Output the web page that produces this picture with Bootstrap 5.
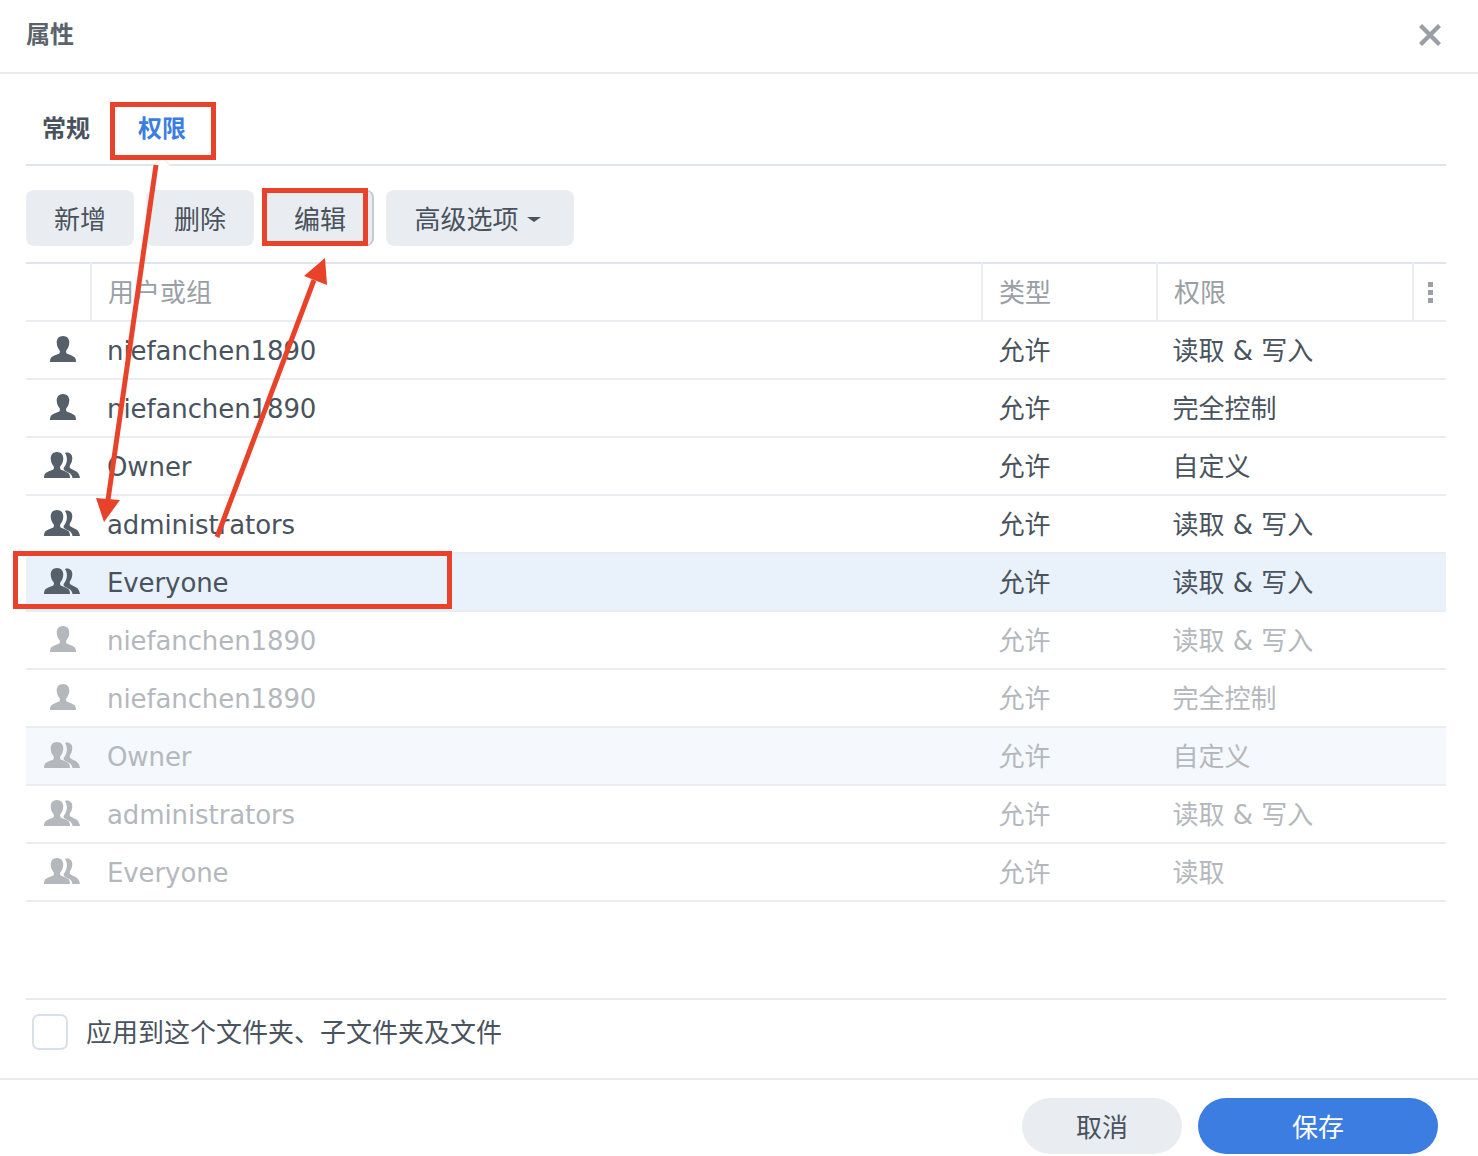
<!DOCTYPE html>
<html lang="zh-CN"><head><meta charset="utf-8"><title>属性</title>
<link href="https://cdn.jsdelivr.net/npm/bootstrap@5.3.0/dist/css/bootstrap.min.css" rel="stylesheet">
<style>
html,body{height:1156px;overflow:hidden;background:#fff}
body{font-family:"DejaVu Sans","Noto Sans CJK SC",sans-serif;font-size:26px;color:#49535e;position:relative}
.dlg-head{height:74px;border-bottom:2px solid #e7ebef;padding:0 37px 3px 26px}
.dlg-title{font-size:24px;font-weight:700;color:#5a636c;margin:0;line-height:1}
.dlg-body{padding:0 32px 0 26px}
.tab-row{height:92px;border-bottom:2px solid #dfe5ec;padding-left:16px;gap:48px;margin:0;position:relative;padding-top:28px}
.tab-row .nav-link{padding:0;font-size:24px;font-weight:700;color:#49535e;line-height:54px;height:54px;border:0;background:none}
.tab-row .nav-link.active{color:#3b7de0;background:none}
.tab-notch{position:absolute;left:130px;bottom:-7px;width:12px;height:12px;background:#fff;border-left:1px solid #e6ebf0;border-top:1px solid #e6ebf0;transform:rotate(45deg)}
.tool-row{gap:12px;padding-top:24px;height:96px}
.tool-btn{height:56px;width:108px;padding:0;background:#e9edf1;border:0;border-radius:8px;font-size:26px;color:#49535e;line-height:60px}
.tool-btn:hover{background:#e9edf1;color:#49535e}
.tool-focus{box-shadow:inset -2px 0 0 #c3cbd4,inset 0 0 0 1px #d4dae1}
.tool-more{width:188px;padding-right:5px}
.tool-caret{display:inline-block;width:0;height:0;border:7px solid transparent;border-top:5px solid #49535e;border-bottom:0;vertical-align:middle;margin-left:8px;margin-top:-4px}
.perm-table{table-layout:fixed;width:1420px;margin:0;border-top:2px solid #dfe5ea;--bs-table-bg:transparent;--bs-table-color:#49535e;color:#49535e}
.perm-table th,.perm-table td{height:58px;padding:2px 0 0 16px;font-size:26px;font-weight:400;vertical-align:middle;border-bottom:2px solid #e9edf1;white-space:nowrap;line-height:1;box-shadow:none}
.perm-table th{color:#9a9fa6;height:58px;border-left:2px solid #e9edf1}
.perm-table th:first-child{border-left:0}
.perm-table td.ic-cell{padding:0 0 0 9px;text-align:center;color:#56606b}
.perm-table th.ic-cell{padding:0;text-align:center}
.perm-table .td-name{letter-spacing:-.1px}
.perm-table .td-type{padding-left:16.5px}
.perm-table .td-perm{padding-left:15.5px}
.ic-svg{display:block;margin:-2px auto 0;fill:currentColor}
.ic-grp{transform:translateX(-1px)}
.row-sel td{background:#e9f1fb;color:#49535e}
.row-off td,.perm-table .row-off td.ic-cell{color:#b4b8bd}
.row-tint td{background:#f5f9fe}
.kebab{display:flex;flex-direction:column;gap:3px;align-items:center}
.kebab i{display:block;width:5px;height:5px;background:#9a9fa6}
.apply-row{margin-top:96px;height:80px;border-top:2px solid #e7ebef;padding:0 0 14px 6px;gap:18px}
.apply-box{width:36px;height:36px;flex:none;margin:0;border:2px solid #d8e0e8;border-radius:7px;background:#fff;appearance:none;display:block}
.apply-label{font-size:26px;line-height:1;color:#49535e;margin:0;padding-top:2px}
.dlg-foot{border-top:2px solid #e7ebef;padding:18px 40px 0 0;gap:16px}
.foot-btn{height:56px;border:0;border-radius:28px;font-size:26px;line-height:60px;padding:0}
.foot-cancel{width:160px;background:#e9edf1;color:#49535e}
.foot-save{width:240px;background:#3b7de0;color:#fff}
.foot-cancel:hover{background:#e9edf1;color:#49535e}.foot-save:hover{background:#3b7de0;color:#fff}
.mark-box{position:absolute;border:5px solid #e8432a;pointer-events:none}
.mark-a{left:110px;top:102px;width:106px;height:58px}
.mark-b{left:262px;top:188px;width:106px;height:58px}
.mark-c{left:13px;top:551px;width:439px;height:58px}
.mark-arrows{position:absolute;left:0;top:0;pointer-events:none}
</style></head>
<body>
<svg width="0" height="0" class="position-absolute">
<symbol id="i-user" viewBox="0 0 26 26"><path d="M13 0c4 0 6.300 2.800 6.300 6.600 0 3.200-1.400 6-2.900 7.700-.4.500-.4 2.400.1 3 1 1.100 6.500 2.300 8.300 4.200.7.800 1.200 2.600 1.200 4.500H0c0-1.900.5-3.700 1.200-4.500 1.800-1.900 7.300-3.100 8.300-4.200.5-.6.500-2.500.1-3C8.100 12.600 6.700 9.800 6.700 6.600 6.700 2.800 9 0 13 0z"/></symbol>
<symbol id="i-group" viewBox="0 0 36 26"><path d="M13 0c4 0 6.300 2.800 6.300 6.600 0 3.200-1.400 6-2.900 7.700-.4.500-.4 2.400.1 3 1 1.100 6.500 2.300 8.300 4.200.7.800 1.200 2.600 1.200 4.500H0c0-1.900.5-3.700 1.200-4.500 1.800-1.900 7.300-3.100 8.300-4.200.5-.6.500-2.500.1-3C8.100 12.600 6.700 9.800 6.700 6.600 6.700 2.800 9 0 13 0z"/><path d="M22 .5c3.600-.6 6.300 1.700 6.300 5.600 0 3-1.100 5.600-2.300 7.200-.4.600-.4 2.200 0 2.800.8 1.100 4.800 2.200 6.800 3.700 1.500 1.200 2.800 3.400 3.200 6.200h-7.500c-.4-2.400-1.500-4-3.300-5-1.900-1.100-4.100-1.800-5.200-3-.7-.8-.5-1.800 0-2.500 1.700-2.200 2.900-4.700 2.900-7.900 0-2.700-.6-4.900-1.900-6.400.3-.3.600-.6 1-.7z"/></symbol>
</svg>

<header class="dlg-head d-flex align-items-center justify-content-between">
  <h1 class="dlg-title">属性</h1>
  <svg width="22" height="22" viewBox="0 0 22 22" aria-label="关闭"><path d="M1.500 1.500l19 19M20.500 1.500l-19 19" stroke="#9a9fa5" stroke-width="4.400" fill="none"/></svg>
</header>

<main class="dlg-body">
  <ul class="nav tab-row">
    <li class="nav-item"><a class="nav-link" href="#">常规</a></li>
    <li class="nav-item"><a class="nav-link active" href="#">权限</a></li>
    <li class="tab-notch"></li>
  </ul>
  <div class="d-flex tool-row">
    <button class="btn tool-btn">新增</button>
    <button class="btn tool-btn">删除</button>
    <button class="btn tool-btn tool-focus">编辑</button>
    <button class="btn tool-btn tool-more">高级选项<span class="tool-caret"></span></button>
  </div>
  <table class="table perm-table">
    <colgroup><col style="width:65px"><col style="width:891px"><col style="width:175px"><col style="width:256px"><col style="width:33px"></colgroup>
    <thead><tr><th class="ic-cell"></th><th>用户或组</th><th>类型</th><th>权限</th><th class="ic-cell"><span class="kebab"><i></i><i></i><i></i></span></th></tr></thead>
    <tbody>
      <tr><td class="ic-cell"><svg class="ic-svg" width="26" height="26"><use href="#i-user"/></svg></td><td class="td-name">niefanchen1890</td><td class="td-type">允许</td><td class="td-perm">读取 &amp; 写入</td><td></td></tr>
      <tr><td class="ic-cell"><svg class="ic-svg" width="26" height="26"><use href="#i-user"/></svg></td><td class="td-name">niefanchen1890</td><td class="td-type">允许</td><td class="td-perm">完全控制</td><td></td></tr>
      <tr><td class="ic-cell"><svg class="ic-svg ic-grp" width="36" height="26"><use href="#i-group"/></svg></td><td class="td-name">Owner</td><td class="td-type">允许</td><td class="td-perm">自定义</td><td></td></tr>
      <tr><td class="ic-cell"><svg class="ic-svg ic-grp" width="36" height="26"><use href="#i-group"/></svg></td><td class="td-name">administrators</td><td class="td-type">允许</td><td class="td-perm">读取 &amp; 写入</td><td></td></tr>
      <tr class="row-sel"><td class="ic-cell"><svg class="ic-svg ic-grp" width="36" height="26"><use href="#i-group"/></svg></td><td class="td-name">Everyone</td><td class="td-type">允许</td><td class="td-perm">读取 &amp; 写入</td><td></td></tr>
      <tr class="row-off"><td class="ic-cell"><svg class="ic-svg" width="26" height="26"><use href="#i-user"/></svg></td><td class="td-name">niefanchen1890</td><td class="td-type">允许</td><td class="td-perm">读取 &amp; 写入</td><td></td></tr>
      <tr class="row-off"><td class="ic-cell"><svg class="ic-svg" width="26" height="26"><use href="#i-user"/></svg></td><td class="td-name">niefanchen1890</td><td class="td-type">允许</td><td class="td-perm">完全控制</td><td></td></tr>
      <tr class="row-off row-tint"><td class="ic-cell"><svg class="ic-svg ic-grp" width="36" height="26"><use href="#i-group"/></svg></td><td class="td-name">Owner</td><td class="td-type">允许</td><td class="td-perm">自定义</td><td></td></tr>
      <tr class="row-off"><td class="ic-cell"><svg class="ic-svg ic-grp" width="36" height="26"><use href="#i-group"/></svg></td><td class="td-name">administrators</td><td class="td-type">允许</td><td class="td-perm">读取 &amp; 写入</td><td></td></tr>
      <tr class="row-off"><td class="ic-cell"><svg class="ic-svg ic-grp" width="36" height="26"><use href="#i-group"/></svg></td><td class="td-name">Everyone</td><td class="td-type">允许</td><td class="td-perm">读取</td><td></td></tr>
    </tbody>
  </table>
  <div class="d-flex align-items-center apply-row">
    <input type="checkbox" class="apply-box" id="apply">
    <label class="apply-label" for="apply">应用到这个文件夹、子文件夹及文件</label>
  </div>
</main>
<footer class="dlg-foot d-flex justify-content-end">
  <button class="btn foot-btn foot-cancel">取消</button>
  <button class="btn foot-btn foot-save">保存</button>
</footer>

<div class="mark-box mark-a"></div>
<div class="mark-box mark-b"></div>
<div class="mark-box mark-c"></div>
<svg class="mark-arrows" width="1478" height="1156" viewBox="0 0 1478 1156">
  <path d="M156 165L108 500" stroke="#e8432a" stroke-width="5" fill="none"/>
  <path d="M104 522L96 498L120 500z" fill="#e8432a"/>
  <path d="M217 537L314 280" stroke="#e8432a" stroke-width="5" fill="none"/>
  <path d="M325 258L304 276L327 285z" fill="#e8432a"/>
</svg>
</body></html>
